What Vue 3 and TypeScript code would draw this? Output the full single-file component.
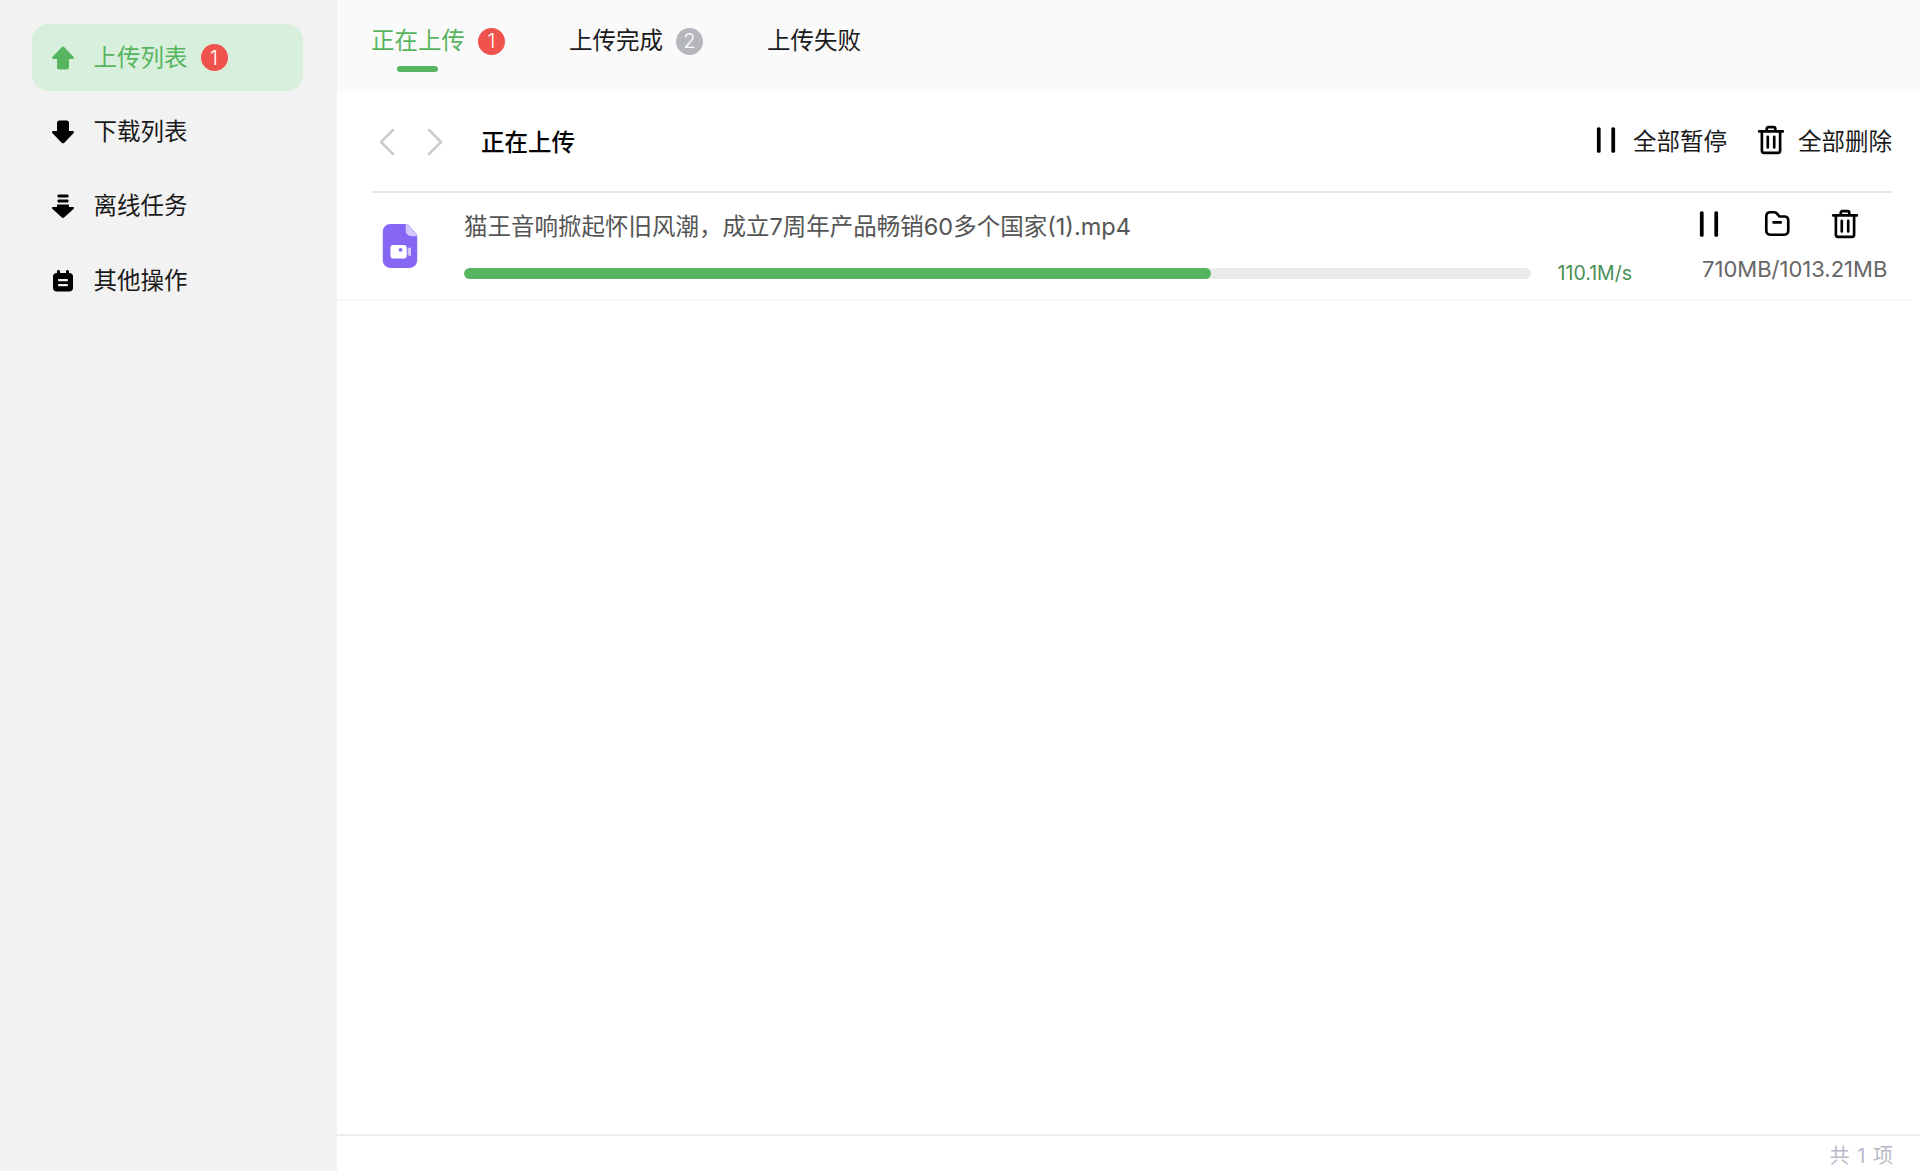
<script setup lang="ts">
const navItems = [
  { label: '上传列表', icon: 'up', active: true, badge: 1 },
  { label: '下载列表', icon: 'down', active: false, badge: 0 },
  { label: '离线任务', icon: 'offline', active: false, badge: 0 },
  { label: '其他操作', icon: 'other', active: false, badge: 0 },
]
const tabs = [
  { label: '正在上传', badge: 1, active: true },
  { label: '上传完成', badge: 2, active: false },
  { label: '上传失败', badge: 0, active: false },
]
const progress = 70
</script>

<template>
  <div class="app">
    <aside class="sidebar">
      <div v-for="item in navItems" :key="item.label" class="nav-item" :class="{ active: item.active }">
        <svg class="nav-icon" viewBox="0 0 24 24" fill="currentColor">
          <path v-if="item.icon === 'up'" d="M12 .6c.4 0 .8.2 1.100.5l9.600 10c.7.7.2 1.800-.8 1.800H18v8.300c0 1.300-1 2.300-2.300 2.300H8.300C7 23.500 6 22.500 6 21.200V12.900H2.100c-1 0-1.500-1.100-.8-1.800l9.600-10c.3-.3.7-.5 1.100-.5z" />
          <path v-else-if="item.icon === 'down'" d="M8.300.5h7.400C17 .5 18 1.500 18 2.800v8.300h3.900c1 0 1.500 1.100.8 1.800l-9.600 10c-.6.600-1.600.600-2.200 0l-9.600-10c-.7-.7-.2-1.800.8-1.800H6V2.800C6 1.500 7 .5 8.300.5z" />
          <template v-else-if="item.icon === 'offline'">
            <rect x="6.500" y="0.500" width="11" height="3" rx="1" />
            <rect x="6.500" y="5.500" width="11" height="3" rx="1" />
            <path d="M7 10.500h10c.5 0 1 .4 1 1V13h3.900c1 0 1.500 1 .8 1.700l-9.600 8.800c-.6.600-1.600.600-2.200 0l-9.600-8.800c-.7-.7-.2-1.700.8-1.700H6v-1.500c0-.6.500-1 1-1z" />
          </template>
          <path v-else fill-rule="evenodd" d="M7.500 1c.8 0 1.500.7 1.500 1.500V4h6V2.500C15 1.700 15.700 1 16.500 1S18 1.700 18 2.500V4h.5C20.500 4 22 5.500 22 7.500V19c0 2-1.500 3.500-3.500 3.500h-13C3.500 22.500 2 21 2 19V7.500C2 5.500 3.500 4 5.500 4H6V2.500C6 1.700 6.700 1 7.500 1zM8 10a1 1 0 0 0 0 2.200h8A1 1 0 0 0 16 10H8zm0 5a1 1 0 0 0 0 2.200h8a1 1 0 0 0 0-2.200H8z" />
        </svg>
        <span class="nav-label">{{ item.label }}</span>
        <span v-if="item.badge" class="badge red">{{ item.badge }}</span>
      </div>
    </aside>

    <main class="main">
      <nav class="tabs">
        <div v-for="tab in tabs" :key="tab.label" class="tab" :class="{ active: tab.active }">
          <span class="tab-label">{{ tab.label }}<i v-if="tab.active" class="tab-bar"></i></span>
          <span v-if="tab.badge" class="badge" :class="tab.active ? 'red' : 'grey'">{{ tab.badge }}</span>
        </div>
      </nav>

      <header class="toolbar">
        <div class="arrows">
          <svg class="chev" viewBox="0 0 16 28" fill="none" stroke="#cccccc" stroke-width="2.500" stroke-linecap="round" stroke-linejoin="round"><path d="M14 2 2 14l12 12" /></svg>
          <svg class="chev" viewBox="0 0 16 28" fill="none" stroke="#cccccc" stroke-width="2.500" stroke-linecap="round" stroke-linejoin="round"><path d="m2 2 12 12L2 26" /></svg>
        </div>
        <h1 class="title">正在上传</h1>
        <div class="actions">
          <button class="action">
            <svg class="act-icon" viewBox="0 0 28 28" fill="#000"><rect x="5.500" y="2" width="3.500" height="24" rx="1.500" /><rect x="19" y="2" width="3.500" height="24" rx="1.500" /></svg>
            全部暂停
          </button>
          <button class="action">
            <svg class="act-icon" viewBox="0 0 28 28" fill="none" stroke="#000" stroke-width="2.500" stroke-linecap="round" stroke-linejoin="round"><path d="M3 6h22M10 6V3.500C10 2.700 10.700 2 11.500 2h5c.8 0 1.500.7 1.500 1.500V6M5.500 6v18c0 1.200 1 2 2 2h13c1 0 2-.8 2-2V6M11 11v10M17 11v10" /></svg>
            全部删除
          </button>
        </div>
      </header>

      <section class="list">
        <article class="row">
          <div class="file-col">
            <svg class="file-icon" viewBox="0 0 36 46">
              <path fill="#8566f5" d="M8 0h16.500c.8 0 1.500.3 2 .8l8.700 9.400c.5.500.8 1.200.8 1.900V38c0 4.400-3.600 8-8 8H8c-4.400 0-8-3.600-8-8V8c0-4.400 3.600-8 8-8z" />
              <path fill="#d5c9fb" d="M24 0c.9 0 1.700.4 2.300 1l8.700 9.500c.6.600 1 1.500 1 2.400h-6c-3.300 0-6-2.700-6-6V0z" />
              <rect x="8" y="22" width="17" height="14" rx="3" fill="#fff" />
              <circle cx="18.500" cy="27" r="2" fill="#8566f5" />
              <path fill="#d5c9fb" d="M26 25.500l2.200-1c.6-.2 1.300.2 1.300.9v7.200c0 .7-.7 1.100-1.300.9L26 32.500v-7z" />
            </svg>
          </div>
          <div class="mid">
            <div class="name">猫王音响掀起怀旧风潮，成立7周年产品畅销60多个国家(1).mp4</div>
            <div class="bar-line">
              <div class="track"><div class="fill" :style="{ width: progress + '%' }"></div></div>
              <span class="speed">110.1M/s</span>
            </div>
          </div>
          <div class="right">
            <div class="ops">
              <svg class="op" viewBox="0 0 28 28" fill="#000"><rect x="5.500" y="2" width="3.500" height="24" rx="1.500" /><rect x="19" y="2" width="3.500" height="24" rx="1.500" /></svg>
              <svg class="op" viewBox="0 0 28 28" fill="none" stroke="#000" stroke-width="2.500" stroke-linecap="round" stroke-linejoin="round"><path d="M4 6.500C4 4.500 5.500 3 7.500 3h4.200c1 0 1.700.5 2.300 1.300L16.200 7H21c2 0 3.500 1.500 3.500 3.500v10C24.500 22.500 23 24 21 24H7.500C5.500 24 4 22.500 4 20.500V6.500zM10.800 12.500h6.700" /></svg>
              <svg class="op" viewBox="0 0 28 28" fill="none" stroke="#000" stroke-width="2.500" stroke-linecap="round" stroke-linejoin="round"><path d="M3 6h22M10 6V3.500C10 2.700 10.700 2 11.500 2h5c.8 0 1.500.7 1.500 1.500V6M5.500 6v18c0 1.200 1 2 2 2h13c1 0 2-.8 2-2V6M11 11v10M17 11v10" /></svg>
            </div>
            <div class="size">710MB/1013.21MB</div>
          </div>
        </article>
      </section>

      <footer class="footer">共 1 项</footer>
    </main>
  </div>
</template>

<style>
html, body { margin: 0; background: #fff; overflow: hidden; }
</style>

<style scoped>
.app {
  display: flex;
  height: 1171px;
  font-family: "Inter", "Noto Sans CJK SC", sans-serif;
  color: #111;
}
.sidebar {
  width: 337px;
  flex: none;
  box-sizing: border-box;
  background: #f2f2f2;
  padding: 24px 34px 0 32px;
  display: flex;
  flex-direction: column;
  gap: 7.400px;
}
.nav-item {
  height: 67px;
  display: flex;
  align-items: center;
  padding-left: 19px;
  border-radius: 16px;
  color: #000;
}
.nav-item.active { background: #d8efdd; color: #57b55f; }
.nav-icon { width: 24px; height: 24px; flex: none; }
.nav-label { margin-left: 18.500px; font-size: 23.500px; line-height: 32px; font-weight: 400; }
.nav-item:not(.active) .nav-label { color: #1a1a1a; }
.badge {
  display: inline-flex;
  align-items: center;
  justify-content: center;
  width: 27px;
  height: 27px;
  border-radius: 50%;
  color: #fff;
  font-size: 20px;
  font-weight: 300;
  margin-left: 13px;
  flex: none;
}
.badge.red { background: #f0524d; }
.badge.grey { background: #b6b7bd; }
.main {
  flex: 1;
  min-width: 0;
  display: flex;
  flex-direction: column;
}
.tabs {
  height: 92px;
  flex: none;
  box-sizing: border-box;
  background: #fafafa;
  padding: 0 0 10px 34px;
  display: flex;
  align-items: center;
  gap: 64px;
}
.tab { display: flex; align-items: center; font-size: 23.500px; color: #1a1a1a; }
.tab.active { color: #57b55f; }
.tab-label { position: relative; line-height: 32px; }
.tab-bar {
  position: absolute;
  left: 26px;
  width: 41px;
  height: 6px;
  top: 41px;
  border-radius: 3px;
  background: #57b55f;
}
.toolbar {
  height: 101px;
  flex: none;
  box-sizing: border-box;
  margin: 0 28px 0 34px;
  border-bottom: 2px solid #e8e8e8;
  display: flex;
  align-items: center;
}
.arrows { display: flex; gap: 32px; margin-left: 8px; }
.chev { width: 16px; height: 28px; }
.title { margin: 2px 0 0 38px; font-size: 23.500px; font-weight: 500; color: #000; line-height: 32px; }
.actions { margin-left: auto; margin-bottom: 3px; display: flex; gap: 29px; }
.action {
  display: flex;
  align-items: center;
  gap: 12px;
  padding: 0;
  border: 0;
  background: none;
  font: inherit;
  font-size: 23.500px;
  color: #1a1a1a;
}
.act-icon { width: 30px; height: 30px; }
.list { flex: 1; }
.row {
  height: 108px;
  box-sizing: border-box;
  margin-right: 10px;
  padding-left: 34px;
  border-bottom: 2px solid #f7f7f9;
  display: flex;
}
.file-col { width: 93px; flex: none; padding-top: 31px; box-sizing: border-box; }
.file-icon { display: block; width: 36px; height: 44px; margin-left: 11px; }
.mid { width: 1168px; flex: none; }
.name { margin-top: 18px; font-size: 23.500px; line-height: 32px; color: #555; }
.bar-line { display: flex; align-items: center; margin-top: 17px; height: 30px; }
.track { width: 1067px; height: 11px; border-radius: 6px; background: #ebebeb; overflow: hidden; margin-top: -3px; }
.fill { height: 100%; border-radius: 6px; background: #57b55f; }
.speed { margin-left: 27px; font-size: 19.500px; color: #4a8f55; white-space: nowrap; margin-top: -4px; }
.right { flex: 1; position: relative; }
.ops { display: flex; gap: 38px; padding-left: 62px; padding-top: 16px; }
.op { width: 30px; height: 30px; flex: none; }
.size { margin-top: 14px; padding-left: 70px; font-size: 22px; line-height: 32px; color: #666; white-space: nowrap; }
.footer {
  height: 37px;
  flex: none;
  box-sizing: border-box;
  border-top: 2px solid #efefef;
  padding-right: 27px;
  text-align: right;
  font-size: 20px;
  line-height: 40px;
  word-spacing: 2px;
  color: #b8bac8;
}
</style>
